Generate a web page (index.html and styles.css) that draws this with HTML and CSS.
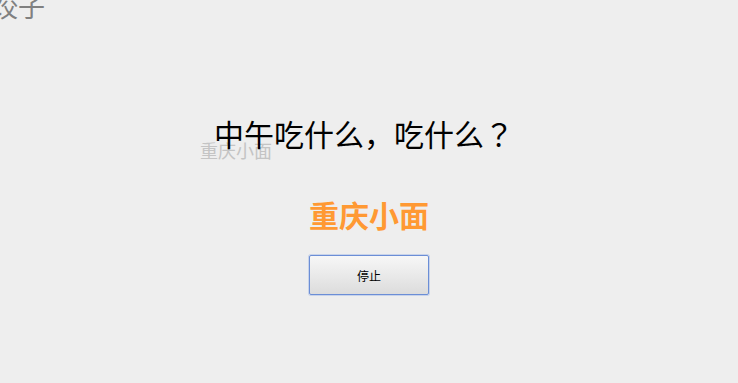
FILE: index.html
```html
<!DOCTYPE html>
<html lang="zh-CN">
<head>
<meta charset="utf-8">
<title>中午吃什么</title>
<link rel="stylesheet" href="styles.css">
</head>
<body>
<div class="stage">
  <span class="floater floater-a">饺子</span>
  <span class="floater floater-b">重庆小面</span>
  <main class="picker">
    <h1 class="title">中午吃什么<span class="punct">，</span>吃什么<span class="punct" lang="ja">？</span></h1>
    <div class="result">重庆小面</div>
    <button class="btn" type="button">停止</button>
  </main>
</div>
</body>
</html>
```
FILE: styles.css
```css
html, body {
  margin: 0;
  padding: 0;
  background: #eeeeee;
  font-family: "Noto Sans CJK SC", "Noto Sans", sans-serif;
}
.stage {
  position: relative;
  width: 738px;
  height: 383px;
  overflow: hidden;
}
.floater {
  position: absolute;
  white-space: nowrap;
  line-height: 1;
}
.floater-a {
  left: -9px;
  top: -8px;
  font-size: 27px;
  color: #808080;
}
.floater-b {
  left: 200px;
  top: 141px;
  font-size: 18px;
  color: #c4c4c4;
  z-index: 0;
}
.picker {
  position: relative;
  z-index: 1;
  display: flex;
  flex-direction: column;
  align-items: center;
  padding-top: 115px;
}
.title {
  margin: 0;
  font-size: 30px;
  font-weight: normal;
  line-height: 36px;
  color: #000;
  padding-right: 10px;
}
.punct {
  font-family: "Noto Sans CJK JP", "Noto Sans CJK SC", sans-serif;
}
.result {
  margin-top: 45px;
  font-size: 30px;
  font-weight: bold;
  line-height: 36px;
  color: #ff9933;
}
.btn {
  margin-top: 23px;
  width: 120px;
  height: 40px;
  border: 1px solid #6b8ed6;
  border-radius: 2px;
  box-shadow: 0 0 0 1px rgba(130, 160, 225, 0.35);
  background: linear-gradient(#f7f7f7, #dcdcdc);
  font-family: "Noto Sans CJK SC", sans-serif;
  font-size: 12px;
  color: #000;
  padding: 0;
}
```
